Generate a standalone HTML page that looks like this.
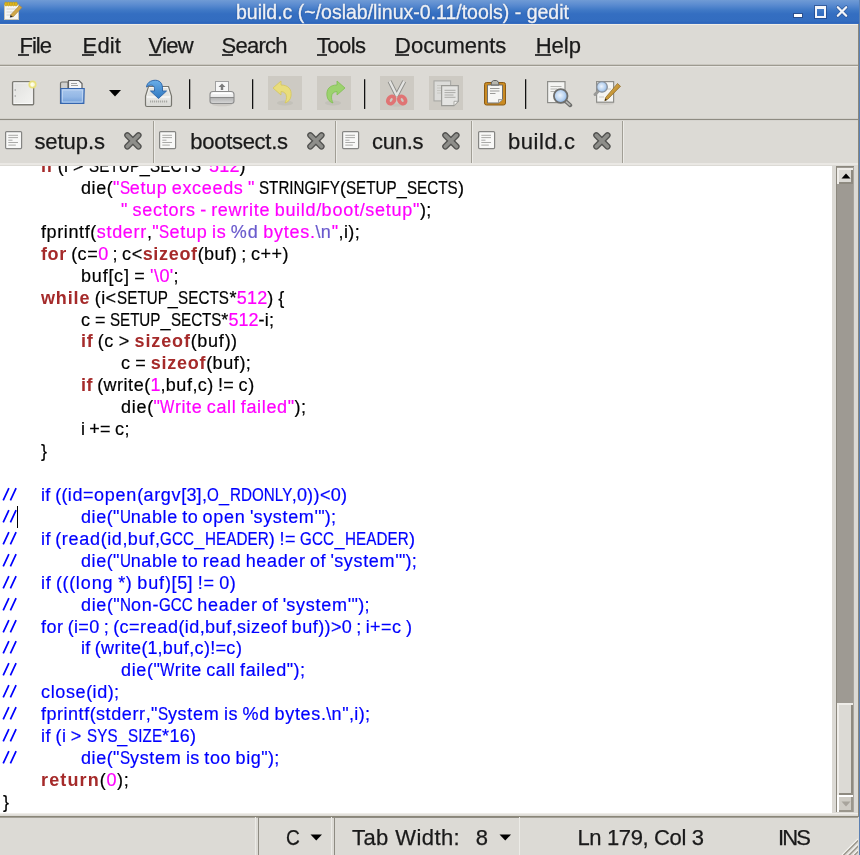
<!DOCTYPE html>
<html><head><meta charset="utf-8">
<style>
html,body{margin:0;padding:0;}
#root{position:absolute;left:0;top:0;width:860px;height:855px;overflow:hidden;background:#dcdad5;will-change:transform;}
body{width:860px;height:855px;overflow:hidden;position:relative;background:#dcdad5;font-family:"Liberation Sans",sans-serif;color:#1a1a1a;}
.abs{position:absolute;}
#title{position:absolute;left:0;top:0;width:860px;height:24px;background:linear-gradient(#709bd5 0px,#5a8bd0 5px,#4079c6 10px,#346ec1 14px,#336dc0 21px,#2f67bd 22.5px,#3a6ec0 24px);}
#title .txt{position:absolute;left:236px;top:1px;font-size:19.5px;color:#eef1f6;white-space:pre;-webkit-text-stroke:0.35px #eef1f6;text-shadow:0 0 1.5px rgba(10,30,80,.6);}
#tline{position:absolute;left:0;top:24px;width:858px;height:1px;background:#f1ede5;}
#rb1{position:absolute;left:858px;top:24px;width:1px;height:793px;background:#8c887c;}
#rb2{position:absolute;left:859px;top:0;width:1px;height:855px;background:#5b80b3;}
.lab{position:absolute;font-size:22px;line-height:22px;white-space:pre;color:#1a1a1a;-webkit-text-stroke:0.25px #1a1a1a;}
.lab u{text-decoration:none;box-shadow:0 2px 0 -0px #1a1a1a;}
.hl{position:absolute;left:0;width:858px;height:1px;}
.sep{position:absolute;top:79px;width:1px;height:30px;background:#111;box-shadow:1px 0 0 rgba(60,60,60,.35);border-radius:1px;}
.dis{position:absolute;top:76px;width:34px;height:34px;background:#cdcac3;}
.tabsep{position:absolute;top:121px;width:1px;height:42px;background:#a19e95;}
.tabsep2{position:absolute;top:121px;width:1px;height:42px;background:#ecebe7;}
.tab{position:absolute;top:128px;font-size:21px;color:#1a1a1a;white-space:pre;line-height:26px;}
#editor{position:absolute;left:0;top:166px;width:832px;height:647px;background:#fff;overflow:hidden;}
.ln{position:absolute;left:0;height:22px;width:832px;}
.t{position:absolute;top:0;white-space:pre;font-size:18px;line-height:22px;color:#000;-webkit-text-stroke:0.2px currentColor;}
.t .k{font-weight:bold;color:#a52a2a;-webkit-text-stroke:0;}
.t i{font-style:normal;}
.t .s{color:#ff00ff;}
.t .p{color:#6a5acd;}
.t.c{color:#0000ff;}
.status{position:absolute;top:826px;font-size:21px;color:#1a1a1a;white-space:pre;line-height:26px;}
</style></head><body>
<div id="root">
<div id="title">
 <svg class="abs" style="left:3px;top:1px" width="20" height="20" viewBox="0 0 20 20">
  <rect x="1.5" y="4" width="14" height="14.5" fill="#f6f6f4" stroke="#c9c4b4" stroke-width="1"/>
  <path d="M3.5 8 H13 M3.5 11 H13 M3.5 14 H10" stroke="#d4d4d0"/>
  <g fill="#e0b820" stroke="#b89410" stroke-width=".5"><ellipse cx="3" cy="3" rx="1.4" ry="2"/><ellipse cx="5.5" cy="3" rx="1.4" ry="2"/><ellipse cx="8" cy="3" rx="1.4" ry="2"/><ellipse cx="10.5" cy="3" rx="1.4" ry="2"/><ellipse cx="13" cy="3" rx="1.4" ry="2"/></g>
  <path d="M7.5 14 L16.5 4.5 L19 6.5 L10 16 Z" fill="#d0a848" stroke="#a8803a" stroke-width=".6"/>
  <path d="M7.5 14 L6.8 16.6 L10 16 Z" fill="#222"/>
 </svg>
 <div class="txt">build.c (~/oslab/linux-0.11/tools) - gedit</div>
 <div class="abs" style="left:793px;top:13px;width:8px;height:3px;background:#fff;border:1px solid #2a4f8e;"></div>
 <div class="abs" style="left:815px;top:6px;width:7px;height:7px;border:2px solid #f4f6fa;border-top-width:3px;box-shadow:0 0 0 1px rgba(20,50,110,.5);"></div>
 <svg class="abs" style="left:835px;top:5px" width="14" height="13" viewBox="0 0 14 13"><path d="M2.8 2.2 L11.2 10.8 M11.2 2.2 L2.8 10.8" stroke="#2a4f8e" stroke-width="3.6" stroke-linecap="round" opacity=".8"/><path d="M2.8 2.2 L11.2 10.8 M11.2 2.2 L2.8 10.8" stroke="#f4f6fa" stroke-width="2.3" stroke-linecap="round"/></svg>
</div>
<div id="tline"></div>


<div class="lab" style="left:19.5px;top:35.0px;letter-spacing:-1.01px">File</div>
<div class="lab" style="left:82.6px;top:35.0px;letter-spacing:0.13px">Edit</div>
<div class="lab" style="left:148.5px;top:35.0px;letter-spacing:-0.68px">View</div>
<div class="lab" style="left:221.6px;top:35.0px;letter-spacing:-0.76px">Search</div>
<div class="lab" style="left:316.8px;top:35.0px;letter-spacing:-0.51px">Tools</div>
<div class="lab" style="left:395.1px;top:35.0px;letter-spacing:0.00px">Documents</div>
<div class="lab" style="left:535.7px;top:35.0px;letter-spacing:0.02px">Help</div>
<div class="abs" style="left:18px;top:54px;width:11px;height:2px;background:#3a3a3a"></div>
<div class="abs" style="left:82px;top:54px;width:12px;height:2px;background:#3a3a3a"></div>
<div class="abs" style="left:149px;top:54px;width:12px;height:2px;background:#3a3a3a"></div>
<div class="abs" style="left:222px;top:54px;width:11px;height:2px;background:#3a3a3a"></div>
<div class="abs" style="left:317px;top:54px;width:10px;height:2px;background:#3a3a3a"></div>
<div class="abs" style="left:395px;top:54px;width:14px;height:2px;background:#3a3a3a"></div>
<div class="abs" style="left:535px;top:54px;width:16px;height:2px;background:#3a3a3a"></div>
<div class="hl" style="top:64px;background:#c9c6bf"></div>
<div class="hl" style="top:65px;background:#9d9a90"></div>
<div class="hl" style="top:66px;background:#e8e6e2"></div>

<!-- toolbar -->
<svg class="abs" style="left:11px;top:80px" width="26" height="27" viewBox="0 0 26 27">
 <defs><linearGradient id="nd" x1="0" y1="0" x2="1" y2="1"><stop offset="0" stop-color="#e2e2e0"/><stop offset="1" stop-color="#f2f2f0"/></linearGradient></defs>
 <rect x="1.6" y="1.6" width="21" height="23.2" rx="1" fill="#fafafa" stroke="#7c7b75" stroke-width="1.4"/>
 <rect x="3.3" y="3.3" width="17.6" height="19.8" fill="url(#nd)"/>
 <path d="M3.5 10 H5 M3.5 16 H5" stroke="#909090" stroke-width="1"/>
 <circle cx="21.5" cy="4.5" r="3.2" fill="#ffffe8" stroke="#ebe27a" stroke-width="1.8" opacity=".95"/>
</svg>
<svg class="abs" style="left:59px;top:79px" width="27" height="27" viewBox="0 0 27 27">
 <defs><linearGradient id="fb" x1="0" y1="0" x2="0" y2="1"><stop offset="0" stop-color="#a8c6ec"/><stop offset=".55" stop-color="#94b8e6"/><stop offset="1" stop-color="#6e9cd8"/></linearGradient></defs>
 <path d="M1.5 4.5 Q1.5 3 3 3 H9 V24.5 H1.5 Z" fill="#cfcfcd" stroke="#6f6f6b" stroke-width="1.2"/>
 <path d="M9.5 1.5 H20 L23 4.5 V10 H9.5 Z" fill="#f6f6f6" stroke="#606060" stroke-width="1.2"/>
 <path d="M12 4.5 H18 M12 6.5 H19" stroke="#9a9a9a" stroke-width=".9"/>
 <path d="M1.8 9.5 H25.2 L24.8 24.5 H1.8 Z" fill="url(#fb)" stroke="#3565ae" stroke-width="1.2"/>
 <path d="M3.6 11 H23.6 L23.3 23 H3.3 Z" fill="none" stroke="#c4daf4" stroke-width="1" opacity=".8"/>
</svg>
<svg class="abs" style="left:108px;top:89px" width="14" height="8" viewBox="0 0 14 8"><path d="M1 1 H13 L7 7.5 Z" fill="#000"/></svg>
<svg class="abs" style="left:144px;top:79px" width="30" height="29" viewBox="0 0 30 29">
 <defs><linearGradient id="tr" x1="0" y1="0" x2="0" y2="1"><stop offset="0" stop-color="#fafaf8"/><stop offset="1" stop-color="#d8d8d4"/></linearGradient>
 <linearGradient id="ar" x1="0" y1="0" x2="0" y2="1"><stop offset="0" stop-color="#6aaee8"/><stop offset="1" stop-color="#2f78c0"/></linearGradient></defs>
 <path d="M4.5 7.5 H24.5 L27.5 17 V26 Q27.5 27.5 26 27.5 H3 Q1.5 27.5 1.5 26 V17 Z" fill="url(#tr)" stroke="#77766f" stroke-width="1.2"/>
 <path d="M5.5 9 H23.5 L25.5 17 H3.5 Z" fill="#e4e4e0"/>
 <path d="M3 18 H26" stroke="#ffffff" stroke-width="1"/>
 <path d="M6 22.5 H24" stroke="#a8a8a4" stroke-width="2.2" stroke-dasharray="1.2 .8"/>
 <path d="M2.5 8 C3 2.5 9 0.5 13.5 1.5 C17 2.5 18.5 5.5 18.5 9 V12 H22.5 L14.5 19.5 L6.5 12 H10.5 V9.5 C10.5 6.5 7.5 5.5 5 6.5 Z" fill="url(#ar)" stroke="#2a62a6" stroke-width=".9"/>
</svg>
<div class="sep" style="left:189px"></div>
<svg class="abs" style="left:208px;top:79px" width="28" height="28" viewBox="0 0 28 28">
 <defs><linearGradient id="pb" x1="0" y1="0" x2="0" y2="1"><stop offset="0" stop-color="#fbfbfb"/><stop offset=".45" stop-color="#e9e9e9"/><stop offset=".5" stop-color="#8a8a8a"/><stop offset=".56" stop-color="#b4b4b4"/><stop offset="1" stop-color="#d8d8d8"/></linearGradient></defs>
 <ellipse cx="14" cy="25.5" rx="10" ry="1.8" fill="#c4c2bc" opacity=".7"/>
 <rect x="7.5" y="2.5" width="13" height="10.5" fill="#f6f6f6" stroke="#a0a0a0" stroke-width="1"/>
 <path d="M10.5 8 L14 4.5 L17.5 8 H15.2 V11 H12.8 V8 Z" fill="#7c7c7c"/>
 <path d="M5 12.5 H23 Q26 12.5 26 15.5 V22 Q26 24.5 23.5 24.5 H4.5 Q2 24.5 2 22 V15.5 Q2 12.5 5 12.5 Z" fill="url(#pb)" stroke="#8c8c8c" stroke-width="1.1"/>
 <path d="M4.5 14.5 H23.5" stroke="#ffffff" stroke-width="1"/>
</svg>
<div class="sep" style="left:252px"></div>
<div class="dis" style="left:268px"></div>
<svg class="abs" style="left:270px;top:79px" width="26" height="28" viewBox="0 0 26 28">
 <ellipse cx="15" cy="24" rx="8" ry="2.5" fill="#bdbab3" opacity=".6"/>
 <path d="M3 9 L11 2 V6 C18 6 22 10 21 17 C20.5 21 18 23 15 24 C17 20 18 13 11 12.5 V16 Z" fill="#e9dd7c" stroke="#d6c65a" stroke-width=".8"/>
</svg>
<div class="dis" style="left:317px"></div>
<svg class="abs" style="left:322px;top:79px" width="26" height="28" viewBox="0 0 26 28">
 <ellipse cx="11" cy="24" rx="8" ry="2.5" fill="#bdbab3" opacity=".6"/>
 <path d="M23 9 L15 2 V6 C8 6 4 10 5 17 C5.5 21 8 23 11 24 C9 20 8 13 15 12.5 V16 Z" fill="#9cd26e" stroke="#80bf52" stroke-width=".8"/>
</svg>
<div class="sep" style="left:364px"></div>
<div class="dis" style="left:380px"></div>
<svg class="abs" style="left:384px;top:80px" width="26" height="27" viewBox="0 0 26 27">
 <ellipse cx="12.7" cy="25" rx="7" ry="1.6" fill="#bdbab2" opacity=".5"/>
 <path d="M5.6 1.2 L13 16 M20.2 1.2 L12.4 16" stroke="#8e8e8a" stroke-width="4.2"/>
 <path d="M5.6 1.2 L13 16 M20.2 1.2 L12.4 16" stroke="#e4e4e2" stroke-width="2.4"/>
 <ellipse cx="7.2" cy="20" rx="3" ry="4" transform="rotate(35 7.2 20)" fill="none" stroke="#e07474" stroke-width="3.8"/>
 <ellipse cx="18.2" cy="20" rx="3" ry="4" transform="rotate(-35 18.2 20)" fill="none" stroke="#e07474" stroke-width="3.8"/>
</svg>
<div class="dis" style="left:429px"></div>
<svg class="abs" style="left:433px;top:80px" width="27" height="28" viewBox="0 0 27 28">
 <rect x="1" y="0.9" width="16.6" height="20" fill="#dcdcda" stroke="#a9a9a5" stroke-width="1.1"/>
 <path d="M4 5.5 H14 M4 8 H14 M4 10.5 H14 M4 13 H14" stroke="#c4c4c0" stroke-width=".9"/>
 <path d="M8.6 5.6 H25.3 V21.3 L21 25.7 H8.6 Z" fill="#e4e4e2" stroke="#9a9a96" stroke-width="1.2"/>
 <path d="M11.5 10.3 H22.5 M11.5 12.6 H22.5 M11.5 15 H20.5 M11.5 17.3 H22.5" stroke="#a4a4a0" stroke-width=".9"/>
 <path d="M21 25.7 V21.3 H25.3 Z" fill="#f6f6f4" stroke="#9a9a96" stroke-width=".8"/>
</svg>
<svg class="abs" style="left:482px;top:78px" width="26" height="29" viewBox="0 0 26 29">
 <rect x="2.5" y="4.5" width="21" height="22.5" rx="2" fill="#c98a22" stroke="#8a5a14" stroke-width="1"/>
 <path d="M5.5 7 H20.5 V21.5 L16.5 25 H5.5 Z" fill="#f6f6f4" stroke="#707070" stroke-width="1"/>
 <path d="M16.5 25 V21.5 H20.5" fill="#e0e0dc" stroke="#909090" stroke-width=".8"/>
 <path d="M8 10.5 H17.5 M8 13 H17.5 M8 15.5 H13.5" stroke="#9a9a98" stroke-width="1"/>
 <path d="M9 7 Q9 3 11.5 2.5 H14.5 Q17 3 17 7 Z" fill="#b6b6ae" stroke="#606060" stroke-width="1"/>
</svg>
<div class="sep" style="left:525px"></div>
<svg class="abs" style="left:546px;top:80px" width="28" height="28" viewBox="0 0 28 28">
 <defs><radialGradient id="ln" cx=".45" cy=".45" r=".6"><stop offset="0" stop-color="#eef4fb"/><stop offset=".6" stop-color="#b8d2f0"/><stop offset="1" stop-color="#78a8e0"/></radialGradient></defs>
 <rect x="1.6" y="1.6" width="17.4" height="21" fill="#f4f4f2" stroke="#8e8e8a" stroke-width="1.2"/>
 <path d="M4.5 6.5 H15.5 M4.5 9 H11 M4.5 11.5 H9" stroke="#b4b4b0" stroke-width="1"/>
 <line x1="19.5" y1="21" x2="24.2" y2="25.2" stroke="#6c6c6a" stroke-width="4" stroke-linecap="round"/>
 <line x1="19.8" y1="21.3" x2="23.8" y2="24.8" stroke="#b8b8b6" stroke-width="1.6" stroke-linecap="round"/>
 <circle cx="14.7" cy="16" r="6.8" fill="url(#ln)" stroke="#6e6e6c" stroke-width="1.8"/>
</svg>
<svg class="abs" style="left:592px;top:79px" width="30" height="27" viewBox="0 0 30 27">
 <defs><radialGradient id="ln2" cx=".45" cy=".45" r=".6"><stop offset="0" stop-color="#eef4fb"/><stop offset=".6" stop-color="#b8d2f0"/><stop offset="1" stop-color="#80acdf"/></radialGradient>
 <linearGradient id="pc" x1="0" y1="0" x2="1" y2="1"><stop offset="0" stop-color="#e8c880"/><stop offset=".5" stop-color="#c89838"/><stop offset="1" stop-color="#a07020"/></linearGradient></defs>
 <ellipse cx="13" cy="24.5" rx="9" ry="1.5" fill="#c4c2bc" opacity=".6"/>
 <rect x="4.6" y="2.6" width="17" height="20.6" fill="#f4f4f2" stroke="#8e8e8a" stroke-width="1.2"/>
 <path d="M14 10 H19 M7 18 H12" stroke="#c8c8c4" stroke-width="1"/>
 <line x1="6.5" y1="12" x2="3" y2="15.5" stroke="#9a9a98" stroke-width="3" stroke-linecap="round"/>
 <circle cx="10" cy="7.9" r="5.3" fill="url(#ln2)" stroke="#8a9098" stroke-width="1.3"/>
 <path d="M25.5 4.5 L28.5 7.3 L16 20 L12.8 21.8 L13.8 18.3 Z" fill="url(#pc)" stroke="#8a6420" stroke-width=".7"/>
 <path d="M12.8 21.8 L13.4 19.6 L15 20.9 Z" fill="#2a2010"/>
</svg>

<div class="hl" style="top:118px;background:#d2d0ca"></div>
<div class="hl" style="top:119px;background:#8e8b82"></div>
<div class="hl" style="top:120px;background:#d6d4cf"></div>

<!-- tabs -->
<svg class="abs" style="left:5px;top:131px" width="18" height="19" viewBox="0 0 18 19"><rect x="0.6" y="0.6" width="16" height="17" rx="1" fill="#f8f8f7" stroke="#858583" stroke-width="1.2"/><path d="M3.3 4.3 H13 M3.3 6.6 H13 M3.3 9.2 H7.5 M3.3 11.5 H13 M3.3 14.1 H10.8" stroke="#a9a9a7" stroke-width="1"/></svg>
<svg class="abs" style="left:123px;top:131px" width="20" height="20" viewBox="0 0 20 20"><path d="M4.3 4.3 L15.5 15.5 M15.5 4.3 L4.3 15.5" stroke="#525250" stroke-width="6.2" stroke-linecap="round"/><path d="M4.3 4.3 L15.5 15.5 M15.5 4.3 L4.3 15.5" stroke="#8e8e8a" stroke-width="3.6" stroke-linecap="round"/></svg>
<div class="tabsep" style="left:153px"></div><div class="tabsep2" style="left:154px"></div>
<svg class="abs" style="left:159px;top:131px" width="18" height="19" viewBox="0 0 18 19"><rect x="0.6" y="0.6" width="16" height="17" rx="1" fill="#f8f8f7" stroke="#858583" stroke-width="1.2"/><path d="M3.3 4.3 H13 M3.3 6.6 H13 M3.3 9.2 H7.5 M3.3 11.5 H13 M3.3 14.1 H10.8" stroke="#a9a9a7" stroke-width="1"/></svg>
<svg class="abs" style="left:306px;top:131px" width="20" height="20" viewBox="0 0 20 20"><path d="M4.3 4.3 L15.5 15.5 M15.5 4.3 L4.3 15.5" stroke="#525250" stroke-width="6.2" stroke-linecap="round"/><path d="M4.3 4.3 L15.5 15.5 M15.5 4.3 L4.3 15.5" stroke="#8e8e8a" stroke-width="3.6" stroke-linecap="round"/></svg>
<div class="tabsep" style="left:335px"></div><div class="tabsep2" style="left:336px"></div>
<svg class="abs" style="left:342px;top:131px" width="18" height="19" viewBox="0 0 18 19"><rect x="0.6" y="0.6" width="16" height="17" rx="1" fill="#f8f8f7" stroke="#858583" stroke-width="1.2"/><path d="M3.3 4.3 H13 M3.3 6.6 H13 M3.3 9.2 H7.5 M3.3 11.5 H13 M3.3 14.1 H10.8" stroke="#a9a9a7" stroke-width="1"/></svg>
<svg class="abs" style="left:441px;top:131px" width="20" height="20" viewBox="0 0 20 20"><path d="M4.3 4.3 L15.5 15.5 M15.5 4.3 L4.3 15.5" stroke="#525250" stroke-width="6.2" stroke-linecap="round"/><path d="M4.3 4.3 L15.5 15.5 M15.5 4.3 L4.3 15.5" stroke="#8e8e8a" stroke-width="3.6" stroke-linecap="round"/></svg>
<div class="tabsep" style="left:471px"></div><div class="tabsep2" style="left:472px"></div>
<svg class="abs" style="left:478px;top:131px" width="18" height="19" viewBox="0 0 18 19"><rect x="0.6" y="0.6" width="16" height="17" rx="1" fill="#f8f8f7" stroke="#858583" stroke-width="1.2"/><path d="M3.3 4.3 H13 M3.3 6.6 H13 M3.3 9.2 H7.5 M3.3 11.5 H13 M3.3 14.1 H10.8" stroke="#a9a9a7" stroke-width="1"/></svg>
<svg class="abs" style="left:592px;top:131px" width="20" height="20" viewBox="0 0 20 20"><path d="M4.3 4.3 L15.5 15.5 M15.5 4.3 L4.3 15.5" stroke="#525250" stroke-width="6.2" stroke-linecap="round"/><path d="M4.3 4.3 L15.5 15.5 M15.5 4.3 L4.3 15.5" stroke="#8e8e8a" stroke-width="3.6" stroke-linecap="round"/></svg>
<div class="lab" style="left:34.4px;top:131.1px;letter-spacing:-0.05px">setup.s</div>
<div class="lab" style="left:190.3px;top:131.1px;letter-spacing:-0.29px">bootsect.s</div>
<div class="lab" style="left:371.9px;top:131.1px;letter-spacing:-0.24px">cun.s</div>
<div class="lab" style="left:507.9px;top:131.1px;letter-spacing:0.57px">build.c</div>
<div class="tabsep" style="left:622px"></div><div class="tabsep2" style="left:623px"></div>

<div class="hl" style="top:163px;background:#eae8e4;height:2px"></div>

<!-- editor -->
<div id="editor">
<div style="position:absolute;left:0;top:-166px;width:832px;height:813px;">
<div class="ln" style="top:155.0px"><span class="t" style="left:41px"><span class="k"><span style="letter-spacing:0.58px">if</span></span><span style="letter-spacing:-0.50px"> </span><span style="letter-spacing:0.41px">(</span><span style="letter-spacing:0.41px">i</span><span style="letter-spacing:-0.50px"> </span><span style="letter-spacing:0.62px">&gt;</span><span style="letter-spacing:-0.50px"> </span><span style="display:inline-block;letter-spacing:0.13px;transform:scaleX(0.8430);transform-origin:0 0;margin-right:-9.52px">SETUP</span><span style="letter-spacing:0.59px">_</span><span style="display:inline-block;letter-spacing:0.13px;transform:scaleX(0.8430);transform-origin:0 0;margin-right:-9.52px">SECTS</span><span style="letter-spacing:0.45px">*</span><span class="s"><span style="letter-spacing:0.15px">512</span></span><span style="letter-spacing:0.41px">)</span></span></div>
<div class="ln" style="top:176.93px"><span class="t" style="left:81px"><span style="letter-spacing:0.57px">die</span><span style="letter-spacing:0.28px">(</span><span class="s"><span style="letter-spacing:0.29px">"</span><span style="display:inline-block;letter-spacing:-0.00px;transform:scaleX(0.8430);transform-origin:0 0;margin-right:-1.88px">S</span><span style="letter-spacing:0.62px">etup</span><span style="letter-spacing:-0.63px"> </span><span style="letter-spacing:0.68px">exceeds</span><span style="letter-spacing:-0.63px"> </span><span style="letter-spacing:0.29px">"</span></span><span style="letter-spacing:-0.63px"> </span><span style="display:inline-block;letter-spacing:-0.00px;transform:scaleX(0.8430);transform-origin:0 0;margin-right:-15.07px">STRINGIFY</span><span style="letter-spacing:0.28px">(</span><span style="display:inline-block;letter-spacing:-0.00px;transform:scaleX(0.8430);transform-origin:0 0;margin-right:-9.42px">SETUP</span><span style="letter-spacing:0.46px">_</span><span style="display:inline-block;letter-spacing:-0.00px;transform:scaleX(0.8430);transform-origin:0 0;margin-right:-9.42px">SECTS</span><span style="letter-spacing:0.28px">)</span></span></div>
<div class="ln" style="top:198.86px"><span class="t" style="left:121px"><span class="s"><span style="letter-spacing:0.45px">"</span><span style="letter-spacing:-0.47px"> </span><span style="letter-spacing:0.75px">sectors</span><span style="letter-spacing:-0.47px"> </span><span style="letter-spacing:0.44px">-</span><span style="letter-spacing:-0.47px"> </span><span style="letter-spacing:0.71px">rewrite</span><span style="letter-spacing:-0.47px"> </span><span style="letter-spacing:0.70px">build</span><span style="letter-spacing:0.39px">/</span><span style="letter-spacing:0.78px">boot</span><span style="letter-spacing:0.39px">/</span><span style="letter-spacing:0.78px">setup</span><span style="letter-spacing:0.45px">"</span></span><span style="letter-spacing:0.41px">);</span></span></div>
<div class="ln" style="top:220.79px"><span class="t" style="left:41px"><span style="letter-spacing:0.61px">fprintf</span><span style="letter-spacing:0.43px">(</span><span class="s"><span style="letter-spacing:0.70px">stderr</span></span><span style="letter-spacing:0.38px">,</span><span class="s"><span style="letter-spacing:0.45px">"</span><span style="display:inline-block;letter-spacing:0.15px;transform:scaleX(0.8430);transform-origin:0 0;margin-right:-1.91px">S</span><span style="letter-spacing:0.77px">etup</span><span style="letter-spacing:-0.48px"> </span><span style="letter-spacing:0.61px">is</span><span style="letter-spacing:-0.48px"> </span></span><span class="p"><span style="letter-spacing:0.89px">%</span><span style="letter-spacing:0.86px">d</span></span><span class="s"><span style="letter-spacing:-0.48px"> </span><span style="letter-spacing:0.76px">bytes</span><span style="letter-spacing:0.38px">.</span></span><span class="p"><span style="letter-spacing:0.38px">\</span><span style="letter-spacing:0.86px">n</span></span><span class="s"><span style="letter-spacing:0.45px">"</span></span><span style="letter-spacing:0.38px">,</span><span style="letter-spacing:0.43px">i</span><span style="letter-spacing:0.41px">);</span></span></div>
<div class="ln" style="top:242.72px"><span class="t" style="left:41px"><span class="k"><span style="letter-spacing:0.63px">for</span></span><span style="letter-spacing:-0.65px"> </span><span style="letter-spacing:0.26px">(</span><span style="letter-spacing:0.62px">c</span><span style="letter-spacing:0.47px">=</span><span class="s"><span style="letter-spacing:-0.00px">0</span></span><span style="letter-spacing:-0.65px"> </span><span style="letter-spacing:0.21px">;</span><span style="letter-spacing:-0.65px"> </span><span style="letter-spacing:0.62px">c</span><span style="letter-spacing:0.47px">&lt;</span><span class="k"><span style="letter-spacing:0.67px">sizeof</span></span><span style="letter-spacing:0.26px">(</span><span style="letter-spacing:0.57px">buf</span><span style="letter-spacing:0.26px">)</span><span style="letter-spacing:-0.65px"> </span><span style="letter-spacing:0.21px">;</span><span style="letter-spacing:-0.65px"> </span><span style="letter-spacing:0.62px">c</span><span style="letter-spacing:0.40px">++)</span></span></div>
<div class="ln" style="top:264.65px"><span class="t" style="left:81px"><span style="letter-spacing:0.85px">buf</span><span style="letter-spacing:0.49px">[</span><span style="letter-spacing:0.90px">c</span><span style="letter-spacing:0.49px">]</span><span style="letter-spacing:-0.37px"> </span><span style="letter-spacing:0.75px">=</span><span style="letter-spacing:-0.37px"> </span><span class="s"><span style="letter-spacing:0.46px">'\</span><span style="letter-spacing:0.28px">0</span><span style="letter-spacing:0.42px">'</span></span><span style="letter-spacing:0.49px">;</span></span></div>
<div class="ln" style="top:286.58px"><span class="t" style="left:41px"><span class="k"><span style="letter-spacing:0.85px">while</span></span><span style="letter-spacing:-0.51px"> </span><span style="letter-spacing:0.39px">(</span><span style="letter-spacing:0.40px">i</span><span style="letter-spacing:0.60px">&lt;</span><span style="display:inline-block;letter-spacing:0.11px;transform:scaleX(0.8430);transform-origin:0 0;margin-right:-9.51px">SETUP</span><span style="letter-spacing:0.58px">_</span><span style="display:inline-block;letter-spacing:0.11px;transform:scaleX(0.8430);transform-origin:0 0;margin-right:-9.51px">SECTS</span><span style="letter-spacing:0.44px">*</span><span class="s"><span style="letter-spacing:0.14px">512</span></span><span style="letter-spacing:0.39px">)</span><span style="letter-spacing:-0.51px"> </span><span style="letter-spacing:0.39px">{</span></span></div>
<div class="ln" style="top:308.51px"><span class="t" style="left:81px"><span style="letter-spacing:0.58px">c</span><span style="letter-spacing:-0.68px"> </span><span style="letter-spacing:0.43px">=</span><span style="letter-spacing:-0.68px"> </span><span style="display:inline-block;letter-spacing:-0.06px;transform:scaleX(0.8430);transform-origin:0 0;margin-right:-9.38px">SETUP</span><span style="letter-spacing:0.41px">_</span><span style="display:inline-block;letter-spacing:-0.06px;transform:scaleX(0.8430);transform-origin:0 0;margin-right:-9.38px">SECTS</span><span style="letter-spacing:0.27px">*</span><span class="s"><span style="letter-spacing:-0.04px">512</span></span><span style="letter-spacing:0.22px">-</span><span style="letter-spacing:0.23px">i</span><span style="letter-spacing:0.18px">;</span></span></div>
<div class="ln" style="top:330.44px"><span class="t" style="left:81px"><span class="k"><span style="letter-spacing:0.64px">if</span></span><span style="letter-spacing:-0.44px"> </span><span style="letter-spacing:0.47px">(</span><span style="letter-spacing:0.83px">c</span><span style="letter-spacing:-0.44px"> </span><span style="letter-spacing:0.68px">&gt;</span><span style="letter-spacing:-0.44px"> </span><span class="k"><span style="letter-spacing:0.88px">sizeof</span></span><span style="letter-spacing:0.47px">(</span><span style="letter-spacing:0.78px">buf</span><span style="letter-spacing:0.47px">))</span></span></div>
<div class="ln" style="top:352.37px"><span class="t" style="left:121px"><span style="letter-spacing:0.69px">c</span><span style="letter-spacing:-0.57px"> </span><span style="letter-spacing:0.54px">=</span><span style="letter-spacing:-0.57px"> </span><span class="k"><span style="letter-spacing:0.75px">sizeof</span></span><span style="letter-spacing:0.33px">(</span><span style="letter-spacing:0.65px">buf</span><span style="letter-spacing:0.31px">);</span></span></div>
<div class="ln" style="top:374.3px"><span class="t" style="left:81px"><span class="k"><span style="letter-spacing:0.44px">if</span></span><span style="letter-spacing:-0.64px"> </span><span style="letter-spacing:0.27px">(</span><span style="letter-spacing:0.53px">write</span><span style="letter-spacing:0.27px">(</span><span class="s"><span style="letter-spacing:0.01px">1</span></span><span style="letter-spacing:0.22px">,</span><span style="letter-spacing:0.58px">buf</span><span style="letter-spacing:0.22px">,</span><span style="letter-spacing:0.63px">c</span><span style="letter-spacing:0.27px">)</span><span style="letter-spacing:-0.64px"> </span><span style="letter-spacing:0.35px">!=</span><span style="letter-spacing:-0.64px"> </span><span style="letter-spacing:0.63px">c</span><span style="letter-spacing:0.27px">)</span></span></div>
<div class="ln" style="top:396.23px"><span class="t" style="left:121px"><span style="letter-spacing:0.71px">die</span><span style="letter-spacing:0.42px">(</span><span class="s"><span style="letter-spacing:0.44px">"</span><span style="display:inline-block;letter-spacing:0.14px;transform:scaleX(0.8430);transform-origin:0 0;margin-right:-2.69px">W</span><span style="letter-spacing:0.59px">rite</span><span style="letter-spacing:-0.49px"> </span><span style="letter-spacing:0.62px">call</span><span style="letter-spacing:-0.49px"> </span><span style="letter-spacing:0.65px">failed</span><span style="letter-spacing:0.44px">"</span></span><span style="letter-spacing:0.40px">);</span></span></div>
<div class="ln" style="top:418.16px"><span class="t" style="left:81px"><span style="letter-spacing:0.07px">i</span><span style="letter-spacing:-0.84px"> </span><span style="letter-spacing:0.27px">+=</span><span style="letter-spacing:-0.84px"> </span><span style="letter-spacing:0.43px">c</span><span style="letter-spacing:0.02px">;</span></span></div>
<div class="ln" style="top:440.09px"><span class="t" style="left:41px"><span style="letter-spacing:0.28px">}</span></span></div>
<div class="ln" style="top:462.02px"></div>
<div class="ln" style="top:483.95px"><svg class="abs" style="left:1px;top:2px" width="18" height="16" viewBox="0 0 18 16"><path d="M2.2 14.4 L7.9 2.1 M9.4 14.4 L15.1 2.1" stroke="#0000ff" stroke-width="1.7"/></svg><span class="t c" style="left:41px"><span style="letter-spacing:0.37px">if</span><span style="letter-spacing:-0.57px"> </span><span style="letter-spacing:0.33px">((</span><span style="letter-spacing:0.55px">id</span><span style="letter-spacing:0.54px">=</span><span style="letter-spacing:0.77px">open</span><span style="letter-spacing:0.33px">(</span><span style="letter-spacing:0.68px">argv</span><span style="letter-spacing:0.28px">[</span><span style="letter-spacing:0.07px">3</span><span style="letter-spacing:0.28px">],</span><span style="display:inline-block;letter-spacing:0.05px;transform:scaleX(0.8430);transform-origin:0 0;margin-right:-2.21px">O</span><span style="letter-spacing:0.52px">_</span><span style="display:inline-block;letter-spacing:0.05px;transform:scaleX(0.8430);transform-origin:0 0;margin-right:-11.83px">RDONLY</span><span style="letter-spacing:0.28px">,</span><span style="letter-spacing:0.07px">0</span><span style="letter-spacing:0.40px">))&lt;</span><span style="letter-spacing:0.07px">0</span><span style="letter-spacing:0.33px">)</span></span></div>
<div class="ln" style="top:505.88px"><svg class="abs" style="left:1px;top:2px" width="18" height="16" viewBox="0 0 18 16"><path d="M2.2 14.4 L7.9 2.1 M9.4 14.4 L15.1 2.1" stroke="#0000ff" stroke-width="1.7"/></svg><span class="t c" style="left:81px"><span style="letter-spacing:0.56px">die</span><span style="letter-spacing:0.28px">("</span><span style="display:inline-block;letter-spacing:-0.01px;transform:scaleX(0.8430);transform-origin:0 0;margin-right:-2.04px">U</span><span style="letter-spacing:0.62px">nable</span><span style="letter-spacing:-0.63px"> </span><span style="letter-spacing:0.53px">to</span><span style="letter-spacing:-0.63px"> </span><span style="letter-spacing:0.71px">open</span><span style="letter-spacing:-0.63px"> </span><span style="letter-spacing:0.15px">'</span><span style="letter-spacing:0.67px">system</span><span style="letter-spacing:0.24px">'");</span></span></div>
<div class="ln" style="top:527.81px"><svg class="abs" style="left:1px;top:2px" width="18" height="16" viewBox="0 0 18 16"><path d="M2.2 14.4 L7.9 2.1 M9.4 14.4 L15.1 2.1" stroke="#0000ff" stroke-width="1.7"/></svg><span class="t c" style="left:41px"><span style="letter-spacing:0.43px">if</span><span style="letter-spacing:-0.52px"> </span><span style="letter-spacing:0.39px">(</span><span style="letter-spacing:0.75px">read</span><span style="letter-spacing:0.39px">(</span><span style="letter-spacing:0.61px">id</span><span style="letter-spacing:0.34px">,</span><span style="letter-spacing:0.70px">buf</span><span style="letter-spacing:0.34px">,</span><span style="display:inline-block;letter-spacing:0.11px;transform:scaleX(0.8430);transform-origin:0 0;margin-right:-6.33px">GCC</span><span style="letter-spacing:0.57px">_</span><span style="display:inline-block;letter-spacing:0.11px;transform:scaleX(0.8430);transform-origin:0 0;margin-right:-11.88px">HEADER</span><span style="letter-spacing:0.39px">)</span><span style="letter-spacing:-0.52px"> </span><span style="letter-spacing:0.47px">!=</span><span style="letter-spacing:-0.52px"> </span><span style="display:inline-block;letter-spacing:0.11px;transform:scaleX(0.8430);transform-origin:0 0;margin-right:-6.33px">GCC</span><span style="letter-spacing:0.57px">_</span><span style="display:inline-block;letter-spacing:0.11px;transform:scaleX(0.8430);transform-origin:0 0;margin-right:-11.88px">HEADER</span><span style="letter-spacing:0.39px">)</span></span></div>
<div class="ln" style="top:549.74px"><svg class="abs" style="left:1px;top:2px" width="18" height="16" viewBox="0 0 18 16"><path d="M2.2 14.4 L7.9 2.1 M9.4 14.4 L15.1 2.1" stroke="#0000ff" stroke-width="1.7"/></svg><span class="t c" style="left:81px"><span style="letter-spacing:0.57px">die</span><span style="letter-spacing:0.29px">("</span><span style="display:inline-block;letter-spacing:-0.00px;transform:scaleX(0.8430);transform-origin:0 0;margin-right:-2.04px">U</span><span style="letter-spacing:0.63px">nable</span><span style="letter-spacing:-0.63px"> </span><span style="letter-spacing:0.53px">to</span><span style="letter-spacing:-0.63px"> </span><span style="letter-spacing:0.64px">read</span><span style="letter-spacing:-0.63px"> </span><span style="letter-spacing:0.66px">header</span><span style="letter-spacing:-0.63px"> </span><span style="letter-spacing:0.53px">of</span><span style="letter-spacing:-0.63px"> </span><span style="letter-spacing:0.16px">'</span><span style="letter-spacing:0.68px">system</span><span style="letter-spacing:0.24px">'");</span></span></div>
<div class="ln" style="top:571.67px"><svg class="abs" style="left:1px;top:2px" width="18" height="16" viewBox="0 0 18 16"><path d="M2.2 14.4 L7.9 2.1 M9.4 14.4 L15.1 2.1" stroke="#0000ff" stroke-width="1.7"/></svg><span class="t c" style="left:41px"><span style="letter-spacing:0.64px">if</span><span style="letter-spacing:-0.30px"> </span><span style="letter-spacing:0.60px">(((</span><span style="letter-spacing:0.93px">long</span><span style="letter-spacing:-0.30px"> </span><span style="letter-spacing:0.62px">*)</span><span style="letter-spacing:-0.30px"> </span><span style="letter-spacing:0.92px">buf</span><span style="letter-spacing:0.58px">)[</span><span style="letter-spacing:0.34px">5</span><span style="letter-spacing:0.55px">]</span><span style="letter-spacing:-0.30px"> </span><span style="letter-spacing:0.68px">!=</span><span style="letter-spacing:-0.30px"> </span><span style="letter-spacing:0.34px">0</span><span style="letter-spacing:0.60px">)</span></span></div>
<div class="ln" style="top:593.6px"><svg class="abs" style="left:1px;top:2px" width="18" height="16" viewBox="0 0 18 16"><path d="M2.2 14.4 L7.9 2.1 M9.4 14.4 L15.1 2.1" stroke="#0000ff" stroke-width="1.7"/></svg><span class="t c" style="left:81px"><span style="letter-spacing:0.63px">die</span><span style="letter-spacing:0.34px">("</span><span style="display:inline-block;letter-spacing:0.06px;transform:scaleX(0.8430);transform-origin:0 0;margin-right:-2.05px">N</span><span style="letter-spacing:0.77px">on</span><span style="letter-spacing:0.33px">-</span><span style="display:inline-block;letter-spacing:0.06px;transform:scaleX(0.8430);transform-origin:0 0;margin-right:-6.31px">GCC</span><span style="letter-spacing:-0.57px"> </span><span style="letter-spacing:0.72px">header</span><span style="letter-spacing:-0.57px"> </span><span style="letter-spacing:0.59px">of</span><span style="letter-spacing:-0.57px"> </span><span style="letter-spacing:0.22px">'</span><span style="letter-spacing:0.73px">system</span><span style="letter-spacing:0.30px">'");</span></span></div>
<div class="ln" style="top:615.53px"><svg class="abs" style="left:1px;top:2px" width="18" height="16" viewBox="0 0 18 16"><path d="M2.2 14.4 L7.9 2.1 M9.4 14.4 L15.1 2.1" stroke="#0000ff" stroke-width="1.7"/></svg><span class="t c" style="left:41px"><span style="letter-spacing:0.47px">for</span><span style="letter-spacing:-0.65px"> </span><span style="letter-spacing:0.25px">(</span><span style="letter-spacing:0.26px">i</span><span style="letter-spacing:0.46px">=</span><span style="letter-spacing:-0.00px">0</span><span style="letter-spacing:-0.65px"> </span><span style="letter-spacing:0.21px">;</span><span style="letter-spacing:-0.65px"> </span><span style="letter-spacing:0.25px">(</span><span style="letter-spacing:0.62px">c</span><span style="letter-spacing:0.46px">=</span><span style="letter-spacing:0.62px">read</span><span style="letter-spacing:0.25px">(</span><span style="letter-spacing:0.47px">id</span><span style="letter-spacing:0.21px">,</span><span style="letter-spacing:0.57px">buf</span><span style="letter-spacing:0.21px">,</span><span style="letter-spacing:0.53px">sizeof</span><span style="letter-spacing:-0.65px"> </span><span style="letter-spacing:0.57px">buf</span><span style="letter-spacing:0.32px">))&gt;</span><span style="letter-spacing:-0.00px">0</span><span style="letter-spacing:-0.65px"> </span><span style="letter-spacing:0.21px">;</span><span style="letter-spacing:-0.65px"> </span><span style="letter-spacing:0.26px">i</span><span style="letter-spacing:0.46px">+=</span><span style="letter-spacing:0.62px">c</span><span style="letter-spacing:-0.65px"> </span><span style="letter-spacing:0.25px">)</span></span></div>
<div class="ln" style="top:637.46px"><svg class="abs" style="left:1px;top:2px" width="18" height="16" viewBox="0 0 18 16"><path d="M2.2 14.4 L7.9 2.1 M9.4 14.4 L15.1 2.1" stroke="#0000ff" stroke-width="1.7"/></svg><span class="t c" style="left:81px"><span style="letter-spacing:0.25px">if</span><span style="letter-spacing:-0.70px"> </span><span style="letter-spacing:0.20px">(</span><span style="letter-spacing:0.47px">write</span><span style="letter-spacing:0.20px">(</span><span style="letter-spacing:-0.05px">1</span><span style="letter-spacing:0.16px">,</span><span style="letter-spacing:0.52px">buf</span><span style="letter-spacing:0.16px">,</span><span style="letter-spacing:0.57px">c</span><span style="letter-spacing:0.26px">)!=</span><span style="letter-spacing:0.57px">c</span><span style="letter-spacing:0.20px">)</span></span></div>
<div class="ln" style="top:659.39px"><svg class="abs" style="left:1px;top:2px" width="18" height="16" viewBox="0 0 18 16"><path d="M2.2 14.4 L7.9 2.1 M9.4 14.4 L15.1 2.1" stroke="#0000ff" stroke-width="1.7"/></svg><span class="t c" style="left:121px"><span style="letter-spacing:0.67px">die</span><span style="letter-spacing:0.39px">("</span><span style="display:inline-block;letter-spacing:0.10px;transform:scaleX(0.8430);transform-origin:0 0;margin-right:-2.68px">W</span><span style="letter-spacing:0.54px">rite</span><span style="letter-spacing:-0.53px"> </span><span style="letter-spacing:0.58px">call</span><span style="letter-spacing:-0.53px"> </span><span style="letter-spacing:0.61px">failed</span><span style="letter-spacing:0.37px">");</span></span></div>
<div class="ln" style="top:681.32px"><svg class="abs" style="left:1px;top:2px" width="18" height="16" viewBox="0 0 18 16"><path d="M2.2 14.4 L7.9 2.1 M9.4 14.4 L15.1 2.1" stroke="#0000ff" stroke-width="1.7"/></svg><span class="t c" style="left:41px"><span style="letter-spacing:0.65px">close</span><span style="letter-spacing:0.33px">(</span><span style="letter-spacing:0.55px">id</span><span style="letter-spacing:0.31px">);</span></span></div>
<div class="ln" style="top:703.25px"><svg class="abs" style="left:1px;top:2px" width="18" height="16" viewBox="0 0 18 16"><path d="M2.2 14.4 L7.9 2.1 M9.4 14.4 L15.1 2.1" stroke="#0000ff" stroke-width="1.7"/></svg><span class="t c" style="left:41px"><span style="letter-spacing:0.52px">fprintf</span><span style="letter-spacing:0.34px">(</span><span style="letter-spacing:0.60px">stderr</span><span style="letter-spacing:0.32px">,"</span><span style="display:inline-block;letter-spacing:0.06px;transform:scaleX(0.8430);transform-origin:0 0;margin-right:-1.89px">S</span><span style="letter-spacing:0.74px">ystem</span><span style="letter-spacing:-0.57px"> </span><span style="letter-spacing:0.52px">is</span><span style="letter-spacing:-0.57px"> </span><span style="letter-spacing:0.80px">%</span><span style="letter-spacing:0.77px">d</span><span style="letter-spacing:-0.57px"> </span><span style="letter-spacing:0.67px">bytes</span><span style="letter-spacing:0.29px">.\</span><span style="letter-spacing:0.77px">n</span><span style="letter-spacing:0.32px">",</span><span style="letter-spacing:0.34px">i</span><span style="letter-spacing:0.31px">);</span></span></div>
<div class="ln" style="top:725.18px"><svg class="abs" style="left:1px;top:2px" width="18" height="16" viewBox="0 0 18 16"><path d="M2.2 14.4 L7.9 2.1 M9.4 14.4 L15.1 2.1" stroke="#0000ff" stroke-width="1.7"/></svg><span class="t c" style="left:41px"><span style="letter-spacing:0.46px">if</span><span style="letter-spacing:-0.48px"> </span><span style="letter-spacing:0.42px">(</span><span style="letter-spacing:0.43px">i</span><span style="letter-spacing:-0.48px"> </span><span style="letter-spacing:0.63px">&gt;</span><span style="letter-spacing:-0.48px"> </span><span style="display:inline-block;letter-spacing:0.14px;transform:scaleX(0.8430);transform-origin:0 0;margin-right:-5.72px">SYS</span><span style="letter-spacing:0.61px">_</span><span style="display:inline-block;letter-spacing:0.14px;transform:scaleX(0.8430);transform-origin:0 0;margin-right:-6.37px">SIZE</span><span style="letter-spacing:0.47px">*</span><span style="letter-spacing:0.16px">16</span><span style="letter-spacing:0.42px">)</span></span></div>
<div class="ln" style="top:747.11px"><svg class="abs" style="left:1px;top:2px" width="18" height="16" viewBox="0 0 18 16"><path d="M2.2 14.4 L7.9 2.1 M9.4 14.4 L15.1 2.1" stroke="#0000ff" stroke-width="1.7"/></svg><span class="t c" style="left:81px"><span style="letter-spacing:0.59px">die</span><span style="letter-spacing:0.31px">("</span><span style="display:inline-block;letter-spacing:0.02px;transform:scaleX(0.8430);transform-origin:0 0;margin-right:-1.89px">S</span><span style="letter-spacing:0.70px">ystem</span><span style="letter-spacing:-0.61px"> </span><span style="letter-spacing:0.48px">is</span><span style="letter-spacing:-0.61px"> </span><span style="letter-spacing:0.61px">too</span><span style="letter-spacing:-0.61px"> </span><span style="letter-spacing:0.59px">big</span><span style="letter-spacing:0.29px">");</span></span></div>
<div class="ln" style="top:769.04px"><span class="t" style="left:41px"><span class="k"><span style="letter-spacing:1.14px">return</span></span><span style="letter-spacing:0.71px">(</span><span class="s"><span style="letter-spacing:0.46px">0</span></span><span style="letter-spacing:0.69px">);</span></span></div>
<div class="ln" style="top:790.97px"><span class="t" style="left:3px"><span style="letter-spacing:0.28px">}</span></span></div>
<div class="abs" style="left:17px;top:506px;width:1px;height:22px;background:#000"></div>
</div>
</div>

<!-- scrollbar -->
<div class="abs" style="left:836px;top:166px;width:18px;height:646px;background:#9e9a93;box-shadow:inset 1px 1px 0 #8b877d, inset -1px -1px 0 #a9a59e"></div>
<div class="abs" style="left:837px;top:168px;width:16px;height:16px;background:#dcdad5;box-shadow:inset 2px 2px 0 #efede9, inset -2px -2px 0 #8e8a80"></div>
<svg class="abs" style="left:841px;top:173px" width="10" height="6" viewBox="0 0 10 6"><path d="M0.5 5.5 H9.5 L5 0.5 Z" fill="#000"/></svg>
<div class="abs" style="left:837px;top:703px;width:16px;height:92px;background:#dcdad5;box-shadow:inset 2px 2px 0 #efede9, inset -2px -2px 0 #8e8a80"></div>
<div class="abs" style="left:837px;top:795px;width:16px;height:17px;background:#cfccc5;box-shadow:inset 2px 2px 0 #ffffff, inset -2px -2px 0 #9a968c"></div>
<svg class="abs" style="left:841px;top:801px" width="10" height="6" viewBox="0 0 10 6"><path d="M0.5 0.5 H9.5 L5 5.5 Z" fill="#a8a49c"/></svg>

<div class="hl" style="top:813px;background:#efede9"></div><div class="hl" style="top:814px;background:#e3e1dc"></div>
<div class="hl" style="top:816px;background:#8a8678"></div><div class="hl" style="top:817px;background:#a3a097"></div>

<!-- status -->
<div class="abs" style="left:255px;top:817px;width:1px;height:38px;background:#ecebe7"></div>
<div class="abs" style="left:258px;top:817px;width:1px;height:38px;background:#8e8b82"></div>
<div class="abs" style="left:258px;top:817px;width:261px;height:1px;background:#8e8b82"></div>
<svg class="abs" style="left:310px;top:834px" width="13" height="7" viewBox="0 0 13 7"><path d="M0.5 0.5 H12 L6.25 6.5 Z" fill="#000"/></svg>
<div class="abs" style="left:331px;top:817px;width:1px;height:38px;background:#ecebe7"></div>
<div class="abs" style="left:334px;top:817px;width:1px;height:38px;background:#8e8b82"></div>
<svg class="abs" style="left:499px;top:834px" width="13" height="7" viewBox="0 0 13 7"><path d="M0.5 0.5 H12 L6.25 6.5 Z" fill="#000"/></svg>
<div class="abs" style="left:519px;top:817px;width:1px;height:38px;background:#ecebe7"></div>
<div class="lab" style="left:285.5px;top:826.5px;transform:scaleX(0.87);transform-origin:0 0">C</div>
<div class="lab" style="left:352.0px;top:827.0px;letter-spacing:0.42px">Tab Width:</div>
<div class="lab" style="left:475.7px;top:827.0px;letter-spacing:0.00px">8</div>
<div class="lab" style="left:577.4px;top:827.0px;letter-spacing:-0.36px">Ln 179, Col 3</div>
<div class="lab" style="left:778.0px;top:827.0px;letter-spacing:-1.84px">INS</div>
<svg class="abs" style="left:838px;top:835px" width="20" height="20" viewBox="0 0 20 20">
 <path d="M4 20 L20 4 M9.5 20 L20 9.5 M15 20 L20 15" stroke="#f6f5f2" stroke-width="1.2"/>
 <path d="M5.2 20.5 L20.5 5.2 M10.7 20.5 L20.5 10.7 M16.2 20.5 L20.5 16.2" stroke="#9a968b" stroke-width="1.4"/>
</svg>

<div id="rb1"></div>
<div id="rb2"></div>
</div>
</body></html>
